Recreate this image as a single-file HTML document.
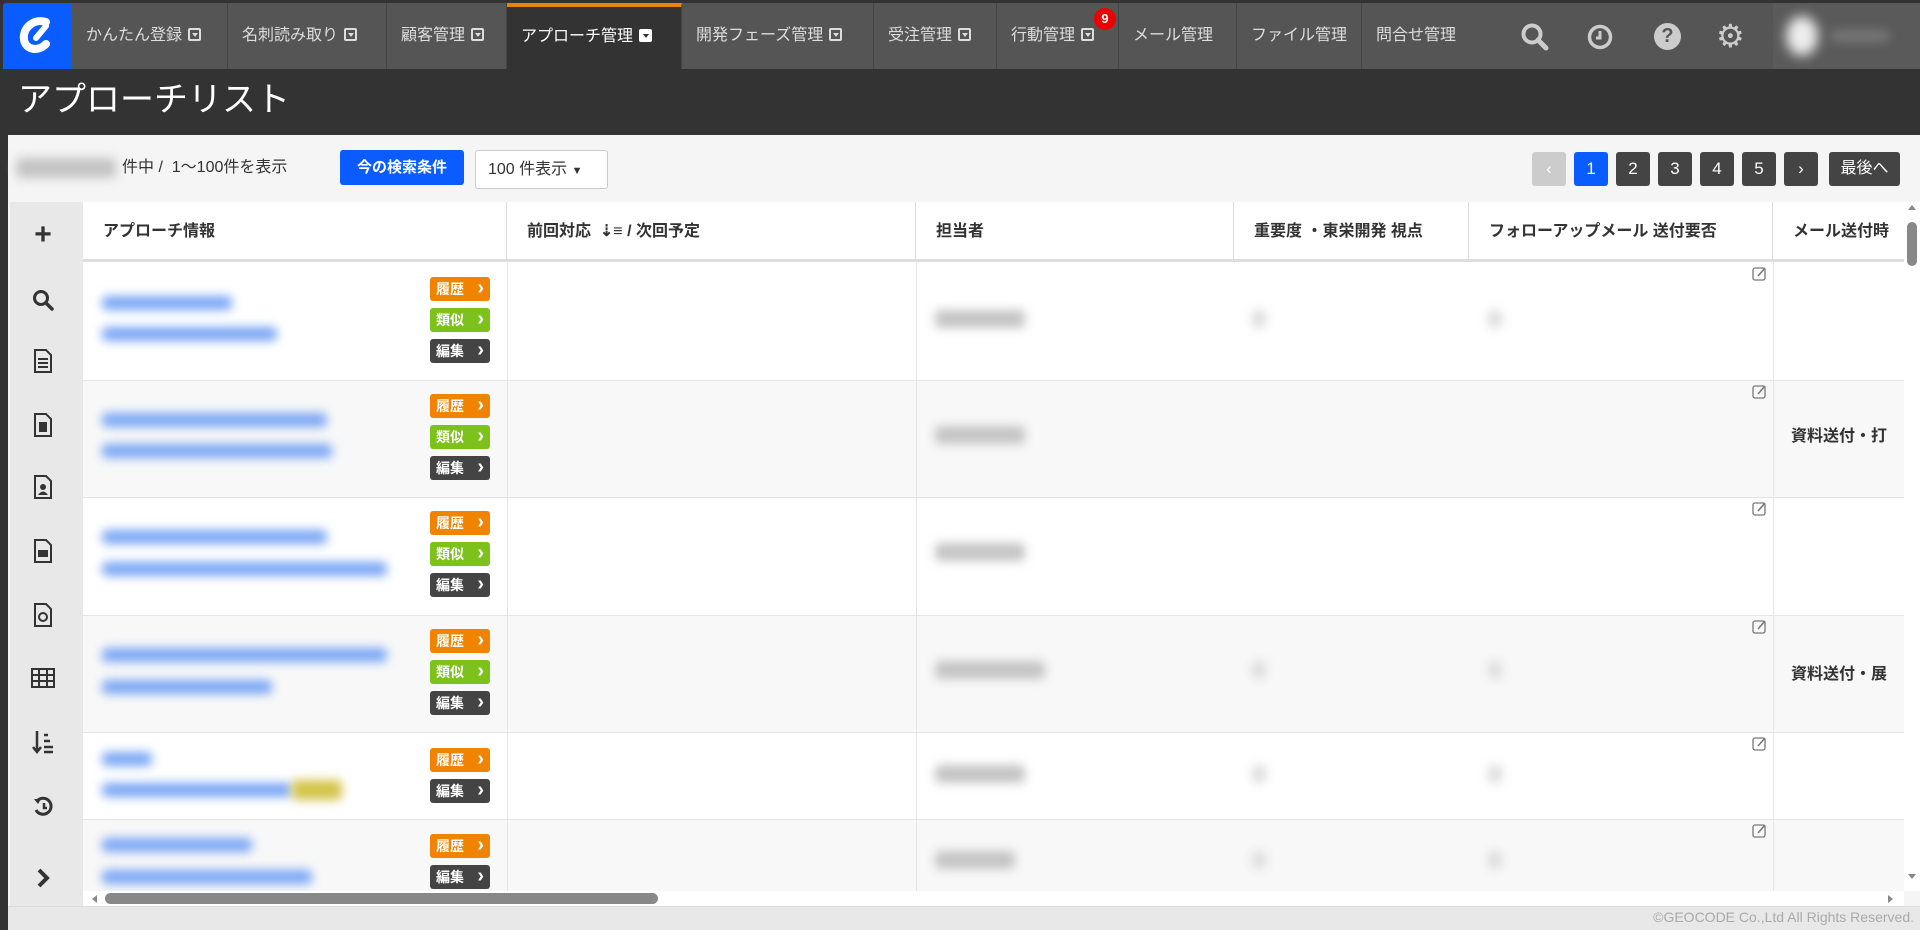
<!DOCTYPE html>
<html><head><meta charset="utf-8">
<style>
*{margin:0;padding:0;box-sizing:border-box}
body{width:1920px;height:930px;overflow:hidden;background:#333;font-family:"Liberation Sans","Noto Sans CJK JP",sans-serif;position:relative}
.abs{position:absolute}
.nav{left:0;top:0;width:1920px;height:70px;background:#333}
.tab{position:absolute;top:3px;height:66px;background:#555;color:#ddd;font-size:16px;line-height:66px;padding-left:14px;border-right:1px solid #444;white-space:nowrap}
.tab.act{background:#333;color:#fff;border-top:4px solid #e8840a;line-height:60px}
.dd{display:inline-block;width:13px;height:13px;border:2px solid #ddd;border-radius:2px;vertical-align:-1px;margin-left:6px;position:relative}
.dd:after{content:"";position:absolute;left:2px;top:3px;border-left:3px solid transparent;border-right:3px solid transparent;border-top:4px solid #ddd}
.tab.act .dd{background:#fff;border-color:#fff}
.tab.act .dd:after{border-top-color:#333}
.pg{position:absolute;top:152px;height:34px;width:34px;background:#444;color:#fff;border-radius:3px;font-size:17px;text-align:center;line-height:34px}
.btn{position:absolute;left:430px;width:60px;height:24px;border-radius:3px;color:#fff;font-size:14px;line-height:24px;padding-left:6px;font-weight:bold}
.btn:after{content:"›";position:absolute;right:6px;top:-1px;font-size:20px}
.o{background:#f08300}.g{background:#7cc21b}.d{background:#444}
.blur{position:absolute;filter:blur(5px);border-radius:5px}
.th{position:absolute;top:202px;height:59px;line-height:59px;font-size:16px;font-weight:bold;color:#333;padding-left:20px;border-right:1px solid #ddd;white-space:nowrap;overflow:hidden}
.ic{position:absolute;left:30px;width:26px;height:26px;color:#333;font-size:24px;text-align:center;line-height:26px;font-weight:bold}
.ed{position:absolute;left:1752px;width:15px;height:15px}
</style></head><body>
<div class="abs nav"></div>
<div class="abs" style="left:3px;top:3px;width:69px;height:66px;background:#0a5cff;border-radius:3px 0 0 0"></div>
<svg class="abs" style="left:16px;top:14px" width="44" height="44" viewBox="0 0 44 44"><path d="M30 8 C18 4 6 14 8 26 C10 36 22 38 30 30" fill="none" stroke="#fff" stroke-width="8" stroke-linecap="round"/><path d="M30 12 L20 24" stroke="#fff" stroke-width="6" stroke-linecap="round"/></svg>
<div class="tab" style="left:72px;width:156px">かんたん登録<span class="dd"></span></div>
<div class="tab" style="left:228px;width:159px">名刺読み取り<span class="dd"></span></div>
<div class="tab" style="left:387px;width:120px">顧客管理<span class="dd"></span></div>
<div class="tab act" style="left:507px;width:175px;top:3px">アプローチ管理<span class="dd"></span></div>
<div class="tab" style="left:682px;width:192px">開発フェーズ管理<span class="dd"></span></div>
<div class="tab" style="left:874px;width:123px">受注管理<span class="dd"></span></div>
<div class="tab" style="left:997px;width:122px">行動管理<span class="dd"></span></div>
<div class="abs" style="left:1094px;top:8px;width:22px;height:22px;border-radius:50%;background:#e00;color:#fff;font-size:13px;text-align:center;line-height:22px;font-weight:bold">9</div>
<div class="tab" style="left:1119px;width:118px">メール管理</div>
<div class="tab" style="left:1237px;width:125px">ファイル管理</div>
<div class="tab" style="left:1362px;width:411px;border-right:none">問合せ管理</div>
<svg class="abs" style="left:1520px;top:22px" width="30" height="30" viewBox="0 0 30 30"><circle cx="12" cy="12" r="8.5" fill="none" stroke="#ccc" stroke-width="4"/><path d="M18 18 L26 26" stroke="#ccc" stroke-width="5" stroke-linecap="round"/></svg>
<svg class="abs" style="left:1586px;top:23px" width="28" height="28" viewBox="0 0 28 28"><circle cx="14" cy="14" r="10.5" fill="none" stroke="#ccc" stroke-width="3.5"/><path d="M14 8 V15 H10" fill="none" stroke="#ccc" stroke-width="3"/></svg>
<div class="abs" style="left:1654px;top:23px;width:27px;height:27px;border-radius:50%;background:#ccc;color:#555;font-weight:bold;font-size:20px;text-align:center;line-height:27px">?</div>
<div class="abs" style="left:1716px;top:19px;font-size:32px;color:#ccc;line-height:34px">⚙</div>
<div class="abs" style="left:1773px;top:3px;width:147px;height:66px;background:#5a5a5a"></div>
<div class="blur" style="left:1786px;top:16px;width:32px;height:40px;background:#eee;border-radius:50%;filter:blur(6px)"></div>
<div class="blur" style="left:1830px;top:30px;width:60px;height:12px;background:#777"></div>
<div class="abs" style="left:18px;top:78px;color:#fff;font-size:34px;line-height:44px">アプローチリスト</div>
<div class="abs" style="left:8px;top:135px;width:1912px;height:795px;background:#f5f5f5"></div>
<div class="blur" style="left:16px;top:158px;width:100px;height:20px;background:#c4c4c4"></div>
<div class="abs" style="left:122px;top:156px;font-size:16px;color:#333;line-height:24px">件中 /&nbsp; 1〜100件を表示</div>
<div class="abs" style="left:340px;top:150px;width:124px;height:35px;background:#0a5cff;color:#fff;font-weight:bold;font-size:15px;line-height:35px;text-align:center;border-radius:3px">今の検索条件</div>
<div class="abs" style="left:475px;top:150px;width:133px;height:39px;background:#fff;border:1px solid #ccc;border-radius:3px;font-size:16px;line-height:37px;padding-left:12px;color:#333">100 件表示 <span style="font-size:11px">▼</span></div>
<div class="pg" style="left:1532px;background:#ccc">‹</div>
<div class="pg" style="left:1574px;background:#0a5cff">1</div>
<div class="pg" style="left:1616px">2</div>
<div class="pg" style="left:1658px">3</div>
<div class="pg" style="left:1700px">4</div>
<div class="pg" style="left:1742px">5</div>
<div class="pg" style="left:1784px">›</div>
<div class="pg" style="left:1829px;width:71px;font-size:16px">最後へ</div>
<div class="abs" style="left:10px;top:202px;width:73px;height:704px;background:#e8e8e8"></div>
<div class="abs" style="left:83px;top:202px;width:1821px;height:689px;background:#fff"></div>
<div class="abs" style="left:83px;top:259px;width:1821px;height:3px;background:#ddd"></div>
<div class="th" style="left:83px;width:424px">アプローチ情報</div>
<div class="th" style="left:507px;width:409px">前回対応 &nbsp;⇣≡ / 次回予定</div>
<div class="th" style="left:916px;width:318px">担当者</div>
<div class="th" style="left:1234px;width:235px">重要度 ・東栄開発 視点</div>
<div class="th" style="left:1469px;width:304px">フォローアップメール 送付要否</div>
<div class="th" style="left:1773px;width:131px;border:none">メール送付時</div>
<div class="abs" style="left:83px;top:380px;width:1821px;height:117px;background:#f8f8f8;border-top:1px solid #e5e5e5"></div>
<div class="abs" style="left:83px;top:497px;width:1821px;height:118px;border-top:1px solid #e5e5e5"></div>
<div class="abs" style="left:83px;top:615px;width:1821px;height:117px;background:#f8f8f8;border-top:1px solid #e5e5e5"></div>
<div class="abs" style="left:83px;top:732px;width:1821px;height:87px;border-top:1px solid #e5e5e5"></div>
<div class="abs" style="left:83px;top:819px;width:1821px;height:72px;background:#f8f8f8;border-top:1px solid #e5e5e5"></div>
<div class="abs" style="left:507px;top:262px;width:1px;height:629px;background:#e5e5e5"></div>
<div class="abs" style="left:916px;top:262px;width:1px;height:629px;background:#e5e5e5"></div>
<div class="abs" style="left:1773px;top:262px;width:1px;height:629px;background:#e5e5e5"></div>
<div class="blur" style="left:102px;top:296px;width:130px;height:14px;background:#7aa6f5"></div>
<div class="blur" style="left:102px;top:327px;width:175px;height:14px;background:#7aa6f5"></div>
<div class="blur" style="left:102px;top:413px;width:225px;height:14px;background:#7aa6f5"></div>
<div class="blur" style="left:102px;top:444px;width:230px;height:14px;background:#7aa6f5"></div>
<div class="blur" style="left:102px;top:530px;width:225px;height:14px;background:#7aa6f5"></div>
<div class="blur" style="left:102px;top:562px;width:285px;height:14px;background:#7aa6f5"></div>
<div class="blur" style="left:102px;top:648px;width:285px;height:14px;background:#7aa6f5"></div>
<div class="blur" style="left:102px;top:680px;width:170px;height:14px;background:#7aa6f5"></div>
<div class="blur" style="left:102px;top:752px;width:50px;height:14px;background:#7aa6f5"></div>
<div class="blur" style="left:102px;top:783px;width:190px;height:14px;background:#7aa6f5"></div>
<div class="blur" style="left:292px;top:780px;width:50px;height:20px;background:#d4c44a"></div>
<div class="blur" style="left:102px;top:838px;width:150px;height:14px;background:#7aa6f5"></div>
<div class="blur" style="left:102px;top:870px;width:210px;height:14px;background:#7aa6f5"></div>
<div class="btn o" style="top:277px">履歴</div><div class="btn g" style="top:308px">類似</div><div class="btn d" style="top:339px">編集</div>
<div class="btn o" style="top:394px">履歴</div><div class="btn g" style="top:425px">類似</div><div class="btn d" style="top:456px">編集</div>
<div class="btn o" style="top:511px">履歴</div><div class="btn g" style="top:542px">類似</div><div class="btn d" style="top:573px">編集</div>
<div class="btn o" style="top:629px">履歴</div><div class="btn g" style="top:660px">類似</div><div class="btn d" style="top:691px">編集</div>
<div class="btn o" style="top:748px">履歴</div><div class="btn d" style="top:779px">編集</div>
<div class="btn o" style="top:834px">履歴</div><div class="btn d" style="top:865px">編集</div>
<div class="blur" style="left:935px;top:310px;width:90px;height:18px;background:#c4c4c4"></div>
<div class="blur" style="left:935px;top:426px;width:90px;height:18px;background:#c4c4c4"></div>
<div class="blur" style="left:935px;top:543px;width:90px;height:18px;background:#c4c4c4"></div>
<div class="blur" style="left:935px;top:661px;width:110px;height:18px;background:#c4c4c4"></div>
<div class="blur" style="left:935px;top:765px;width:90px;height:18px;background:#c4c4c4"></div>
<div class="blur" style="left:935px;top:851px;width:80px;height:18px;background:#c4c4c4"></div>
<div class="blur" style="left:1252px;top:310px;width:14px;height:18px;background:#ddd"></div>
<div class="blur" style="left:1488px;top:310px;width:14px;height:18px;background:#ddd"></div>
<div class="blur" style="left:1252px;top:661px;width:14px;height:18px;background:#ddd"></div>
<div class="blur" style="left:1488px;top:661px;width:14px;height:18px;background:#ddd"></div>
<div class="blur" style="left:1252px;top:765px;width:14px;height:18px;background:#ddd"></div>
<div class="blur" style="left:1488px;top:765px;width:14px;height:18px;background:#ddd"></div>
<div class="blur" style="left:1252px;top:851px;width:14px;height:18px;background:#ddd"></div>
<div class="blur" style="left:1488px;top:851px;width:14px;height:18px;background:#ddd"></div>
<svg class="ed" style="top:266px" viewBox="0 0 15 15"><rect x="1" y="2" width="12" height="12" rx="2" fill="none" stroke="#777" stroke-width="1.3"/><path d="M6 10 L13 2" stroke="#777" stroke-width="1.6"/></svg>
<svg class="ed" style="top:384px" viewBox="0 0 15 15"><rect x="1" y="2" width="12" height="12" rx="2" fill="none" stroke="#777" stroke-width="1.3"/><path d="M6 10 L13 2" stroke="#777" stroke-width="1.6"/></svg>
<svg class="ed" style="top:501px" viewBox="0 0 15 15"><rect x="1" y="2" width="12" height="12" rx="2" fill="none" stroke="#777" stroke-width="1.3"/><path d="M6 10 L13 2" stroke="#777" stroke-width="1.6"/></svg>
<svg class="ed" style="top:619px" viewBox="0 0 15 15"><rect x="1" y="2" width="12" height="12" rx="2" fill="none" stroke="#777" stroke-width="1.3"/><path d="M6 10 L13 2" stroke="#777" stroke-width="1.6"/></svg>
<svg class="ed" style="top:736px" viewBox="0 0 15 15"><rect x="1" y="2" width="12" height="12" rx="2" fill="none" stroke="#777" stroke-width="1.3"/><path d="M6 10 L13 2" stroke="#777" stroke-width="1.6"/></svg>
<svg class="ed" style="top:823px" viewBox="0 0 15 15"><rect x="1" y="2" width="12" height="12" rx="2" fill="none" stroke="#777" stroke-width="1.3"/><path d="M6 10 L13 2" stroke="#777" stroke-width="1.6"/></svg>
<div class="abs" style="left:1791px;top:422px;font-size:16px;font-weight:bold;color:#333">資料送付・打</div>
<div class="abs" style="left:1791px;top:660px;font-size:16px;font-weight:bold;color:#333">資料送付・展</div>
<div class="ic" style="top:222px;font-size:30px">+</div>
<svg class="abs" style="left:31px;top:288px" width="24" height="24" viewBox="0 0 24 24"><circle cx="10" cy="10" r="6.5" fill="none" stroke="#333" stroke-width="3"/><path d="M15 15 L21 21" stroke="#333" stroke-width="3.5" stroke-linecap="round"/></svg>
<svg class="abs" style="left:33px;top:348px" width="20" height="26" viewBox="0 0 20 26"><path d="M2 2 H13 L18 7 V24 H2 Z" fill="none" stroke="#333" stroke-width="2"/><path d="M5 11 H15 M5 15 H15 M5 19 H15" stroke="#333" stroke-width="2"/></svg>
<svg class="abs" style="left:33px;top:412px" width="20" height="26" viewBox="0 0 20 26"><path d="M2 2 H13 L18 7 V24 H2 Z" fill="none" stroke="#333" stroke-width="2"/><rect x="6" y="10" width="8" height="10" fill="#333"/></svg>
<svg class="abs" style="left:33px;top:474px" width="20" height="26" viewBox="0 0 20 26"><path d="M2 2 H13 L18 7 V24 H2 Z" fill="none" stroke="#333" stroke-width="2"/><circle cx="10" cy="13" r="3" fill="#333"/><path d="M5 21 Q10 14 15 21Z" fill="#333"/></svg>
<svg class="abs" style="left:33px;top:538px" width="20" height="26" viewBox="0 0 20 26"><path d="M2 2 H13 L18 7 V24 H2 Z" fill="none" stroke="#333" stroke-width="2"/><rect x="5" y="12" width="10" height="7" fill="#333"/></svg>
<svg class="abs" style="left:33px;top:602px" width="20" height="26" viewBox="0 0 20 26"><path d="M2 2 H13 L18 7 V24 H2 Z" fill="none" stroke="#333" stroke-width="2"/><circle cx="10" cy="15" r="4" fill="none" stroke="#333" stroke-width="2"/></svg>
<svg class="abs" style="left:31px;top:667px" width="24" height="22" viewBox="0 0 24 22"><rect x="1" y="2" width="22" height="18" fill="none" stroke="#333" stroke-width="2"/><path d="M1 8 H23 M1 14 H23 M8 2 V20 M16 2 V20" stroke="#333" stroke-width="2"/></svg>
<svg class="abs" style="left:32px;top:729px" width="22" height="26" viewBox="0 0 22 26"><path d="M5 2 V22 M1 18 L5 23 L9 18" fill="none" stroke="#333" stroke-width="2.5"/><path d="M12 6 H16 M12 12 H18 M12 18 H21 M12 23 H21" stroke="#333" stroke-width="2.5"/></svg>
<svg class="abs" style="left:32px;top:795px" width="24" height="24" viewBox="0 0 24 24"><path d="M5 6 A8 8 0 1 1 4 15" fill="none" stroke="#333" stroke-width="3"/><path d="M2 4 L6 9 L9 4Z" fill="#333"/><path d="M12 8 V13 H15" fill="none" stroke="#333" stroke-width="2.5"/></svg>
<svg class="abs" style="left:35px;top:866px" width="16" height="24" viewBox="0 0 16 24"><path d="M4 4 L12 12 L4 20" fill="none" stroke="#333" stroke-width="4"/></svg>
<div class="abs" style="left:83px;top:891px;width:1821px;height:15px;background:#fff"></div>
<div class="abs" style="left:92px;top:895px;border-right:5px solid #888;border-top:4px solid transparent;border-bottom:4px solid transparent"></div>
<div class="abs" style="left:105px;top:893px;width:553px;height:11px;background:#888;border-radius:6px"></div>
<div class="abs" style="left:1888px;top:895px;border-left:5px solid #888;border-top:4px solid transparent;border-bottom:4px solid transparent"></div>
<div class="abs" style="left:1904px;top:202px;width:16px;height:689px;background:#fff"></div>
<div class="abs" style="left:1908px;top:205px;border-bottom:5px solid #888;border-left:4px solid transparent;border-right:4px solid transparent"></div>
<div class="abs" style="left:1907px;top:222px;width:10px;height:44px;background:#888;border-radius:5px"></div>
<div class="abs" style="left:1908px;top:874px;border-top:5px solid #888;border-left:4px solid transparent;border-right:4px solid transparent"></div>
<div class="abs" style="left:8px;top:906px;width:1912px;height:24px;background:#e8e8e8;border-top:1px solid #ddd"></div>
<div class="abs" style="right:6px;top:909px;font-size:14px;color:#aaa">©GEOCODE Co.,Ltd All Rights Reserved.</div>
</body></html>
